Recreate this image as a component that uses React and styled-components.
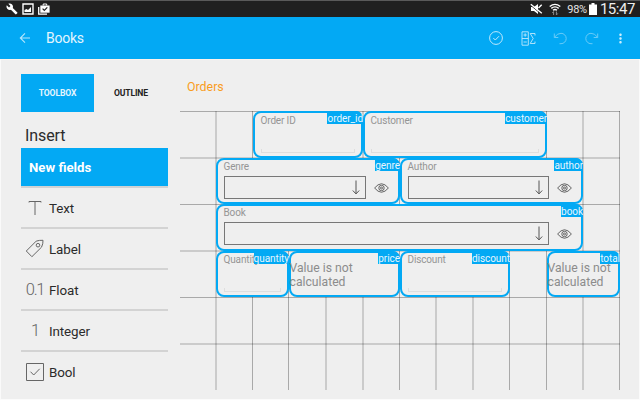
import React from "react";
import styled, { createGlobalStyle } from "styled-components";
import { MdBuild, MdMoreVert } from "react-icons/md";

const BLUE = "#03a9f4";

const GlobalStyle = createGlobalStyle`
  * { box-sizing: border-box; }
  body { margin: 0; background: #efefef; font-family: Roboto, sans-serif; overflow: hidden; }
  svg { display: block; flex: none; }
`;

const Screen = styled.div`
  width: 640px;
  height: 400px;
  display: flex;
  flex-direction: column;
  background: #efefef;
  border-bottom: 1px solid #fbfbfb;
  overflow: hidden;
`;

const StatusBar = styled.div`
  height: 17px;
  flex: none;
  display: flex;
  align-items: center;
  justify-content: space-between;
  padding: 0 5px 0 6px;
  background: #202020;
  border-top: 1px solid #5a5a5a;
  color: #fff;
`;

const StatusGroup = styled.div`
  display: flex;
  align-items: center;
  gap: ${(p) => p.$gap}px;
`;

const Percent = styled.span`
  font-size: 11px;
  line-height: 14px;
  color: #e4e4e4;
  letter-spacing: -0.3px;
  margin: 2px -4px 0 0;
`;

const Clock = styled.span`
  font-size: 15px;
  line-height: 16px;
  color: #eee;
  letter-spacing: -0.45px;
  margin-left: -3px;
`;

const AppBar = styled.header`
  height: 42px;
  flex: none;
  display: flex;
  align-items: center;
  background: ${BLUE};
  color: #e2f5fe;
  padding: 0 15px 0 19px;
`;

const PageTitle = styled.h1`
  margin: 0 0 0 15px;
  font-size: 14px;
  font-weight: 400;
  line-height: 18px;
  letter-spacing: -0.25px;
  flex: 1;
`;

const Actions = styled.div`
  display: flex;
  align-items: center;
`;

const Action = styled.div`
  width: 32px;
  display: flex;
  justify-content: center;
  opacity: ${(p) => (p.$disabled ? 0.45 : 0.85)};
`;

const MoreAction = styled(Action)`
  width: 12px;
  margin-left: 6px;
  margin-right: -1px;
  opacity: 0.9;
`;

const Main = styled.main`
  flex: 1;
  display: flex;
  border-top: 1px solid #fdf2ec;
  border-left: 1px solid #fafafa;
  border-right: 1px solid #fafafa;
`;

const Sidebar = styled.aside`
  width: 147px;
  margin-left: 20px;
  padding-top: 14px;
  flex: none;
`;

const Tabs = styled.div`
  display: grid;
  grid-template-columns: 73px 74px;
  height: 38px;
`;

const Tab = styled.div`
  display: flex;
  align-items: center;
  justify-content: center;
  font-size: 8.6px;
  font-weight: 700;
  letter-spacing: -0.15px;
  color: ${(p) => (p.$active ? "#e2f5fe" : "#222")};
  background: ${(p) => (p.$active ? BLUE : "transparent")};
`;

const SectionTitle = styled.h2`
  margin: 14px 0 3px 4px;
  height: 19px;
  font-size: 16px;
  line-height: 19px;
  font-weight: 400;
  letter-spacing: -0.1px;
  color: #2b2b2b;
`;

const GroupHeader = styled.div`
  height: 40px;
  padding: 0 8px;
  background: ${BLUE};
  border-bottom: 2px solid #cfd2d4;
  color: #fff;
  font-size: 13.2px;
  font-weight: 700;
  line-height: 39px;
`;

const ToolItem = styled.div`
  height: 41px;
  display: flex;
  align-items: center;
  padding-left: 4px;
  padding-top: 1px;
  border-bottom: 2px solid ${(p) => (p.$last ? "transparent" : "#d3d3d3")};
  color: #2b2b2b;
  font-size: 13.4px;
  letter-spacing: -0.1px;
`;

const ToolIcon = styled.span`
  width: 20px;
  margin-right: 4px;
  display: flex;
  justify-content: center;
  font-size: 16.5px;
  font-weight: 300;
  line-height: 18px;
  letter-spacing: -1.3px;
  color: #666;
  white-space: nowrap;
`;

const Form = styled.section`
  margin-left: 12px;
  padding-top: 17px;
`;

const FormTitle = styled.h2`
  margin: 0 0 16px 7px;
  height: 18px;
  font-size: 12.4px;
  line-height: 19px;
  font-weight: 400;
  color: #f99d1e;
`;

const Canvas = styled.div`
  display: grid;
  grid-template-columns: 36px 37px 36px 37px 37px 37px 36px 37px 37px 37px 36px 37px;
  grid-template-rows: 47px 46px 47px 46px 47px 46px;
`;

const Column = styled.i`
  grid-column: ${(p) => p.$at};
  grid-row: 1 / -1;
  width: ${(p) => (p.$soft ? 2 : 1)}px;
  margin-left: -1px;
  background: rgba(0, 0, 0, ${(p) => (p.$soft ? 0.15 : 0.29)});
  ${(p) => p.$end && "justify-self: end;"}
`;

const Row = styled.i`
  grid-row: ${(p) => p.$at};
  grid-column: 1 / -1;
  height: ${(p) => (p.$soft ? 2 : 1)}px;
  margin-top: ${(p) => (p.$soft ? -1 : 0)}px;
  background: rgba(0, 0, 0, ${(p) => (p.$soft ? 0.15 : 0.29)});
`;

const FieldBox = styled.div`
  grid-column: ${(p) => p.$from} / ${(p) => p.$to};
  grid-row: ${(p) => p.$row};
  position: relative;
  min-width: 0;
  border: 2px solid ${BLUE};
  border-radius: 8px;
  background: #efefef;
  display: flex;
  flex-direction: column;
  color: #959595;
`;

const FieldLabel = styled.span`
  padding: ${(p) => (p.$first ? 1 : 0)}px 0 0 5.5px;
  font-size: 10px;
  line-height: 13px;
  letter-spacing: -0.15px;
`;

const FieldTag = styled.span`
  position: absolute;
  top: -2px;
  right: -2px;
  height: 13px;
  border-top-right-radius: 7px;
  background: ${BLUE};
  color: #e6f6fe;
  font-size: 10px;
  line-height: 15px;
  letter-spacing: -0.05px;
`;

const Underline = styled.div`
  height: 4px;
  margin: auto 6px 3px;
  border: 1px solid #dedede;
  border-top: 0;
`;

const LookupRow = styled.div`
  display: flex;
  align-items: center;
  margin: 3px 9px 0 6px;
  color: #555;
`;

const SelectBox = styled.div`
  flex: 1;
  height: 23px;
  border: 1px solid #777;
  display: flex;
  align-items: center;
  justify-content: flex-end;
  padding-right: 5px;
  margin-right: 8px;
`;

const Message = styled.p`
  margin: 8px 0 0 -1.5px;
  font-size: 12.2px;
  line-height: 14px;
  color: #8c8c8c;
  white-space: nowrap;
`;

const Svg = ({ w, h, children, sw = 1 }) => (
  <svg width={w} height={h} viewBox={`0 0 ${w} ${h}`} fill="none" stroke="currentColor" strokeWidth={sw}>
    {children}
  </svg>
);

const PictureIcon = () => (
  <Svg w={12} h={12}>
    <path d="M1 1h10v10H1z" strokeWidth="1.4" />
    <path d="M2.5 9V7l2-1 1.5 1 3-3v5z" fill="currentColor" stroke="none" />
  </Svg>
);

const BriefcaseIcon = () => (
  <Svg w={12} h={12}>
    <path d="M.7 4v7.2H9" strokeWidth="1.3" />
    <path d="M2.3 2.5H11.6V9.7H2.3z" fill="currentColor" stroke="none" />
    <path d="M5.2 2.5V1h3.5v1.5" />
    <path d="M4.6 5.6l1.7 1.7 3-3" stroke="#202020" strokeWidth="1.2" />
  </Svg>
);

const MuteIcon = () => (
  <Svg w={13} h={12}>
    <path d="M1 4h3l4-3v10L4 8H1z" fill="currentColor" stroke="none" />
    <path d="M1 2.6l10 8.2" stroke="#202020" strokeWidth="1" />
    <path d="M.8 1.3l11 9M8.5 5l3.2-3.2" strokeWidth="1.4" />
  </Svg>
);

const WifiIcon = () => (
  <Svg w={12} h={13}>
    <path d="M.7 3.5Q6-.8 11.3 3.5M2.3 5.4Q6 2.4 9.7 5.4M4 7.2q2-1.5 4 0" strokeWidth="1.4" />
    <path d="M4.6 12V8.5M3.3 10l1.3-1.5M7.4 8.5V12M7.4 12l1.3-1.5" stroke="#8b8b8b" />
  </Svg>
);

const BatteryIcon = () => (
  <Svg w={8} h={12}>
    <path d="M2.5 0h3v1.5H8V12H0V1.5h2.5z" fill="currentColor" stroke="none" />
  </Svg>
);

const BackIcon = () => (
  <Svg w={12} h={12}>
    <path d="M11 6H1.5M6 1.3L1.3 6 6 10.7" strokeWidth="1.1" opacity=".8" />
  </Svg>
);

const AcceptIcon = () => (
  <Svg w={14} h={14}>
    <circle cx="7" cy="7" r="6.4" />
    <path d="M4.3 7l2 2 3.7-3.8" />
  </Svg>
);

const FormulaIcon = () => (
  <Svg w={15} h={15} sw={0.9}>
    <path d="M1 .8h6.3v13.4H1zM1 7.5h6.3M2.5 4h3.3M4.15 2.3v3.4M2.5 11h3.3" />
    <path d="M14 4.500V2.500H9.200l3 5-3 5H14V10.500" />
  </Svg>
);

const UndoIcon = ({ flip }) => (
  <Svg w={14} h={13}>
    <g transform={flip ? "translate(14 0) scale(-1 1)" : undefined}>
      <path d="M1.3 1.5v4h4M1.5 5.3Q4 1.3 8 1.3a5.2 5.2 0 0 1 0 10.4H6.5" />
    </g>
  </Svg>
);

const LabelIcon = () => (
  <Svg w={20} h={20}>
    <path d="M1.3 12L11.2 2.1Q14.5 1.1 18 1.3 18.2 4.8 16.5 8.2L6.9 17.7z" strokeLinejoin="round" />
    <circle cx="13" cy="6.2" r="1.8" />
  </Svg>
);

const TextIcon = () => (
  <Svg w={14} h={16}>
    <path d="M1 2.5V1.5h12v1M7 1.5V15" />
  </Svg>
);

const CheckIcon = () => (
  <Svg w={18} h={18}>
    <path d="M.5.5h17v17H.5z" />
    <path d="M4.5 8.7l3.2 3.3 6-6.2" />
  </Svg>
);

const ArrowIcon = () => (
  <Svg w={8} h={15}>
    <path d="M4 .5v13.3M.8 10.5L4 13.9l3.2-3.4" />
  </Svg>
);

const EyeIcon = () => (
  <Svg w={15} h={10} sw={0.9}>
    <path d="M.6 5Q7.5-3.5 14.4 5 7.5 13.5.6 5z" />
    <circle cx="7.5" cy="5" r="2.7" />
    <circle cx="7.5" cy="5" r="1" />
  </Svg>
);

const tools = [
  { name: "Text", icon: <TextIcon /> },
  { name: "Label", icon: <LabelIcon /> },
  { name: "Float", icon: "0.1" },
  { name: "Integer", icon: "1" },
  { name: "Bool", icon: <CheckIcon /> },
];

const fields = [
  { tag: "order_id", label: "Order ID", row: 1, from: 3, to: 6, kind: "input" },
  { tag: "customer", label: "Customer", row: 1, from: 6, to: 11, kind: "input" },
  { tag: "genre", label: "Genre", row: 2, from: 2, to: 7, kind: "lookup" },
  { tag: "author", label: "Author", row: 2, from: 7, to: 12, kind: "lookup" },
  { tag: "book", label: "Book", row: 3, from: 2, to: 12, kind: "lookup" },
  { tag: "quantity", label: "Quantity", row: 4, from: 2, to: 4, kind: "input" },
  { tag: "price", row: 4, from: 4, to: 7, kind: "computed" },
  { tag: "discount", label: "Discount", row: 4, from: 7, to: 10, kind: "input" },
  { tag: "total", row: 4, from: 11, to: 13, kind: "computed" },
];

const softColumns = [2, 5, 6, 8, 9, 12];

const Field = ({ field }) => (
  <FieldBox $row={field.row} $from={field.from} $to={field.to}>
    {field.label && <FieldLabel $first={field.row === 1}>{field.label}</FieldLabel>}
    {field.kind === "input" && <Underline />}
    {field.kind === "lookup" && (
      <LookupRow>
        <SelectBox>
          <ArrowIcon />
        </SelectBox>
        <EyeIcon />
      </LookupRow>
    )}
    {field.kind === "computed" && (
      <Message>
        Value is not
        <br />
        calculated
      </Message>
    )}
    <FieldTag>{field.tag}</FieldTag>
  </FieldBox>
);

export default function App() {
  return (
    <Screen>
      <GlobalStyle />
      <StatusBar>
        <StatusGroup $gap={4}>
          <MdBuild size={12} />
          <PictureIcon />
          <BriefcaseIcon />
        </StatusGroup>
        <StatusGroup $gap={6}>
          <MuteIcon />
          <WifiIcon />
          <Percent>98%</Percent>
          <BatteryIcon />
          <Clock>15:47</Clock>
        </StatusGroup>
      </StatusBar>
      <AppBar>
        <BackIcon />
        <PageTitle>Books</PageTitle>
        <Actions>
          <Action><AcceptIcon /></Action>
          <Action><FormulaIcon /></Action>
          <Action $disabled><UndoIcon /></Action>
          <Action $disabled><UndoIcon flip /></Action>
          <MoreAction><MdMoreVert size={15} /></MoreAction>
        </Actions>
      </AppBar>
      <Main>
        <Sidebar>
          <Tabs>
            <Tab $active>TOOLBOX</Tab>
            <Tab>OUTLINE</Tab>
          </Tabs>
          <SectionTitle>Insert</SectionTitle>
          <GroupHeader>New fields</GroupHeader>
          {tools.map((tool, i) => (
            <ToolItem key={tool.name} $last={i === tools.length - 1}>
              <ToolIcon>{tool.icon}</ToolIcon>
              {tool.name}
            </ToolItem>
          ))}
        </Sidebar>
        <Form>
          <FormTitle>Orders</FormTitle>
          <Canvas>
            {fields.map((field) => (
              <Field key={field.tag} field={field} />
            ))}
            {[2, 3, 4, 5, 6, 7, 8, 9, 10, 11, 12].map((n) => (
              <Column key={n} $at={n} $soft={softColumns.includes(n)} />
            ))}
            <Column $at={12} $end />
            {[1, 2, 3, 4, 5, 6].map((n) => (
              <Row key={n} $at={n} $soft={n % 2 === 0} />
            ))}
          </Canvas>
        </Form>
      </Main>
    </Screen>
  );
}
